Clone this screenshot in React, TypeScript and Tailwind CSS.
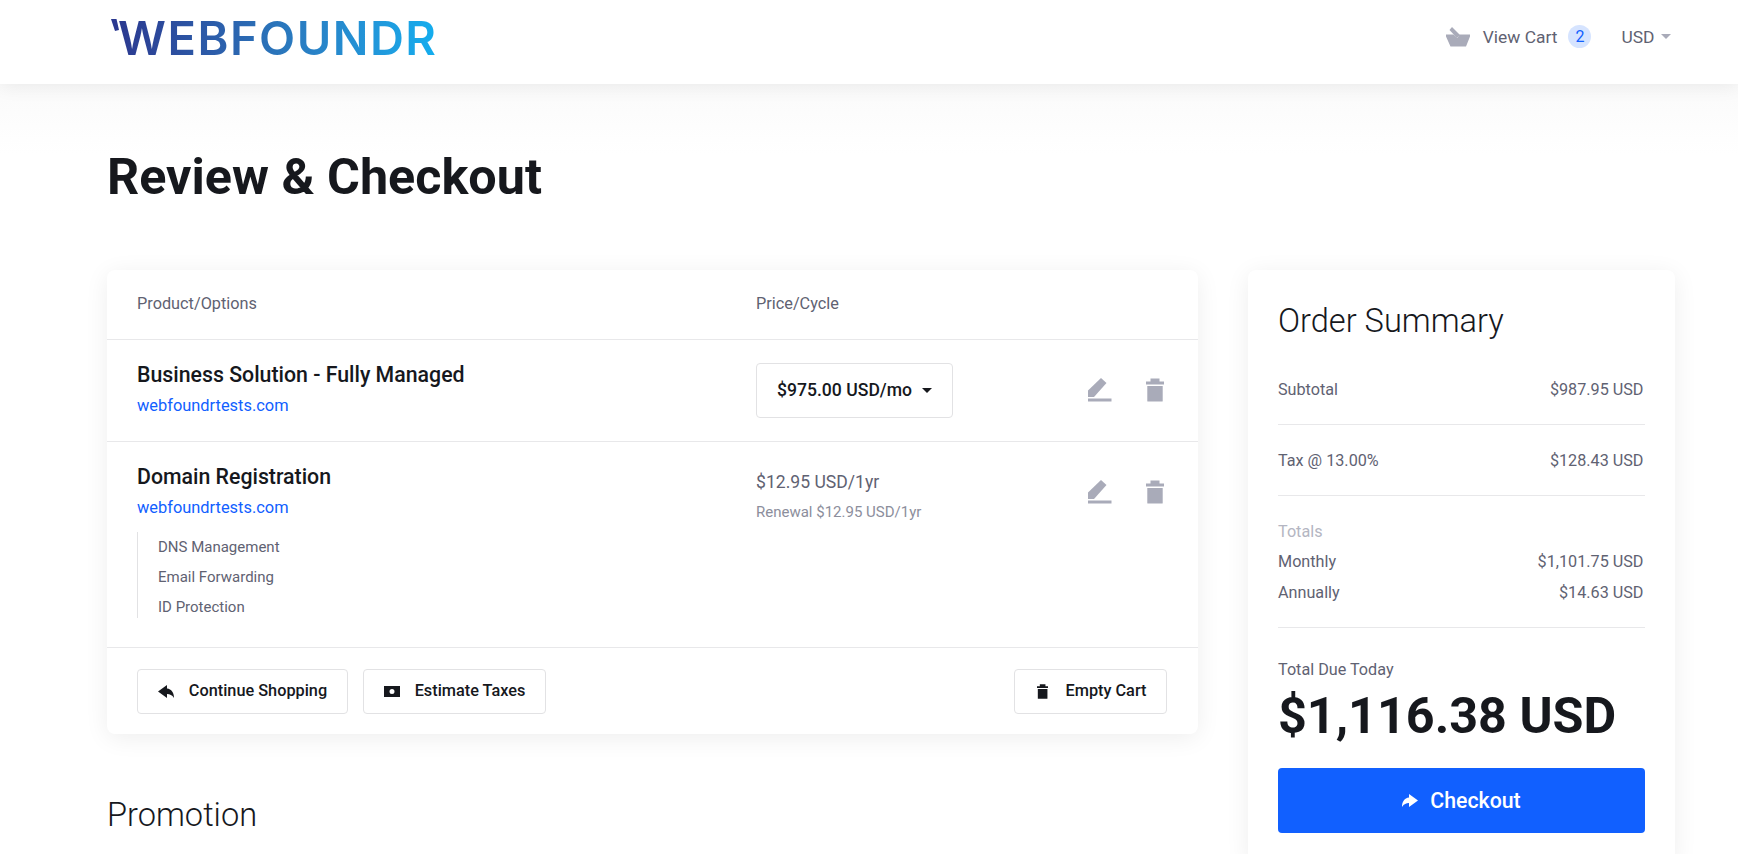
import React from "react";

const ink = "#16181d";

const EditIcon = () => (
  <svg width="24" height="24" viewBox="0 0 24 24" fill="#a9abb9">
    <path d="M0 19V12.500L13 0l5.500 5L6 19z" />
    <path d="M0 20.500h23.500v3H0z" />
  </svg>
);

const TrashIcon = ({ height = 24, color = "#a9abb9" }: { height?: number; color?: string }) => (
  <svg width={(height * 18) / 24} height={height} viewBox="0 0 18 24" fill={color}>
    <path d="M1.300 8h15.400v15a.6.6 0 0 1-.6.6H1.900a.6.6 0 0 1-.6-.6z" />
    <path d="M0 3.500h4.500V.5h9v3H18v3H0z" />
  </svg>
);

const BasketIcon = () => (
  <svg width="24" height="20" viewBox="0 0 24 20" fill="#a9abb9">
    <path d="M0 7.500h7.500l4 3.500 2-3.500H24v2l-4 10H4.500L0 9.500z" />
    <path d="M3.500 3L6 0l8 8-3 3z" />
  </svg>
);

const ReplyIcon = ({ flip = false, color = ink }: { flip?: boolean; color?: string }) => (
  <svg width="16" height="14" viewBox="0 0 16 14" fill={color} className={flip ? "-scale-x-100" : ""}>
    <path d="M0 6.500L9 0v3.500c4.500.5 7 4 7 9.500-2-3-4-4-7-4v4z" />
  </svg>
);

const MoneyIcon = () => (
  <svg width="16" height="11" viewBox="0 0 16 11">
    <path fill={ink} fillRule="evenodd" d="M0 0h16v11H0zM8 3a2.500 2.500 0 1 0 0 5 2.500 2.500 0 0 0 0-5z" />
  </svg>
);

const OutlineButton = ({ icon, label, width }: { icon: React.ReactNode; label: string; width: string }) => (
  <button className={`${width} h-[45px] flex items-center justify-center gap-[15px] bg-white border border-[#e2e2e4] rounded-[4px] text-[16.300px] font-medium text-[#16181d]`}>
    <span className="w-[16px] flex justify-center">{icon}</span>
    {label}
  </button>
);

const ItemActions = () => (
  <div className="flex items-center gap-[34px]">
    <EditIcon />
    <TrashIcon />
  </div>
);

const SummaryRow = ({ label, value }: { label: string; value: string }) => (
  <div className="flex justify-between pr-[1.500px] text-[16.200px] leading-[22px] text-[#5f6272]">
    <span>{label}</span>
    <span>{value}</span>
  </div>
);

export default function App() {
  return (
    <div className="h-[854px] overflow-hidden bg-white" style={{ fontFamily: "Roboto, sans-serif" }}>
      <header className="relative z-10 h-[84px] bg-white shadow-[0_2px_18px_rgba(0,0,0,0.07)] flex items-center justify-between pl-[111px] pr-[67px]">
        <div className="flex items-start -mt-[10px]">
          <svg width="8" height="12" viewBox="0 0 8 12" fill="#2b3990" className="mt-[5px] mr-[-1px]">
            <path d="M0 0h5.500L8 11l-4 1z" />
          </svg>
          <div
            className="text-[47px] leading-[47px] font-semibold tracking-[1.500px] bg-clip-text text-transparent bg-gradient-to-r from-[#2b3990] via-[#2a75bb] to-[#12aeef]"
            style={{ fontFamily: "Inter, sans-serif" }}
          >
            WEBFOUNDR
          </div>
        </div>
        <div className="flex items-center text-[17.400px] text-[#5f6272] -mt-[10px]">
          <BasketIcon />
          <span className="ml-[13px]">View Cart</span>
          <span className="ml-[11px] w-[23px] h-[23px] rounded-full bg-[#d6e4ff] text-[#1160ff] text-[16px] flex items-center justify-center">2</span>
          <span className="ml-[30px]">USD</span>
          <span className="ml-[6.500px] w-0 h-0 border-x-[5px] border-x-transparent border-t-[5px] border-t-[#a9abb9]" />
        </div>
      </header>

      <main className="bg-gradient-to-b from-[#fafafa] to-white to-[70px] pl-[107px] pr-[63px]">
        <h1 className="pt-[55px] text-[50.300px] leading-[76px] font-bold text-[#16181d]">Review &amp; Checkout</h1>

        <div className="mt-[55px] flex gap-[50px] items-start">
          <div className="w-[1091px] shrink-0">
            <section className="bg-white rounded-[8px] shadow-[0_4px_24px_rgba(0,0,0,0.07)]">
              <div className="h-[70px] pl-[30px] flex items-center text-[16.300px] text-[#5f6272] border-b border-[#e8e8ea]">
                <span className="w-[619px]">Product/Options</span>
                <span>Price/Cycle</span>
              </div>

              <div className="h-[102px] pl-[30px] pr-[34px] flex border-b border-[#e8e8ea]">
                <div className="w-[619px] pt-[21px]">
                  <div className="text-[21.300px] leading-[28px] font-medium text-[#16181d]">Business Solution - Fully Managed</div>
                  <div className="mt-[5px] text-[16.400px] leading-[24px] text-[#1160ff]">webfoundrtests.com</div>
                </div>
                <div className="flex-1 flex items-center justify-between">
                  <button className="w-[197px] h-[55px] bg-white border border-[#e2e2e4] rounded-[4px] flex items-center justify-center gap-[10px] text-[17.600px] font-medium text-[#16181d]">
                    $975.00 USD/mo
                    <span className="w-0 h-0 border-x-[5px] border-x-transparent border-t-[5px] border-t-[#16181d]" />
                  </button>
                  <div className="-mt-[1px]">
                    <ItemActions />
                  </div>
                </div>
              </div>

              <div className="h-[206px] pl-[30px] pr-[34px] flex border-b border-[#e8e8ea]">
                <div className="w-[619px] pt-[21px]">
                  <div className="text-[21.300px] leading-[28px] font-medium text-[#16181d]">Domain Registration</div>
                  <div className="mt-[5px] text-[16.400px] leading-[24px] text-[#1160ff]">webfoundrtests.com</div>
                  <ul className="mt-[12px] h-[86px] pl-[20px] border-l border-[#e2e2e4] text-[15px] leading-[30px] text-[#5f6272]">
                    <li>DNS Management</li>
                    <li>Email Forwarding</li>
                    <li>ID Protection</li>
                  </ul>
                </div>
                <div className="flex-1 pt-[28px] flex justify-between items-start">
                  <div>
                    <div className="text-[17.600px] leading-[24px] text-[#5f6272]">$12.95 USD/1yr</div>
                    <div className="mt-[8px] text-[15px] leading-[20px] text-[#8c8e9c]">Renewal $12.95 USD/1yr</div>
                  </div>
                  <div className="mt-[10px]">
                    <ItemActions />
                  </div>
                </div>
              </div>

              <div className="h-[86px] pl-[30px] pr-[31px] flex items-start pt-[21px] gap-[15px]">
                <OutlineButton icon={<ReplyIcon />} label="Continue Shopping" width="w-[211px]" />
                <OutlineButton icon={<MoneyIcon />} label="Estimate Taxes" width="w-[183px]" />
                <div className="ml-auto">
                  <OutlineButton icon={<TrashIcon height={15} color={ink} />} label="Empty Cart" width="w-[153px]" />
                </div>
              </div>
            </section>

            <h2 className="mt-[59px] text-[32.600px] leading-[44px] font-light text-[#16181d]">Promotion</h2>
          </div>

          <aside className="w-[427px] shrink-0 bg-white rounded-[8px] shadow-[0_4px_24px_rgba(0,0,0,0.07)] px-[30px] pt-[29px] pb-[30px]">
            <h2 className="text-[32.600px] leading-[44px] font-light text-[#16181d]">Order Summary</h2>
            <div className="mt-[36px] pb-[23px] border-b border-[#e8e8ea]">
              <SummaryRow label="Subtotal" value="$987.95 USD" />
            </div>
            <div className="mt-[25px] pb-[23px] border-b border-[#e8e8ea]">
              <SummaryRow label="Tax @ 13.00%" value="$128.43 USD" />
            </div>
            <div className="mt-[25px] pb-[23px] border-b border-[#e8e8ea]">
              <div className="text-[16.200px] leading-[22px] text-[#b4b6c2] mb-[8px]">Totals</div>
              <div className="flex flex-col gap-[9px]">
                <SummaryRow label="Monthly" value="$1,101.75 USD" />
                <SummaryRow label="Annually" value="$14.63 USD" />
              </div>
            </div>
            <div className="mt-[31px] text-[16.200px] leading-[22px] text-[#5f6272]">Total Due Today</div>
            <div className="mt-[7px] text-[50.300px] leading-[56px] font-bold text-[#16181d] whitespace-nowrap">$1,116.38 USD</div>
            <button className="mt-[24px] w-full h-[65px] bg-[#1160ff] rounded-[4px] flex items-center justify-center gap-[12px] text-white text-[21.300px] font-medium">
              <ReplyIcon flip color="#ffffff" />
              Checkout
            </button>
          </aside>
        </div>
      </main>
    </div>
  );
}
